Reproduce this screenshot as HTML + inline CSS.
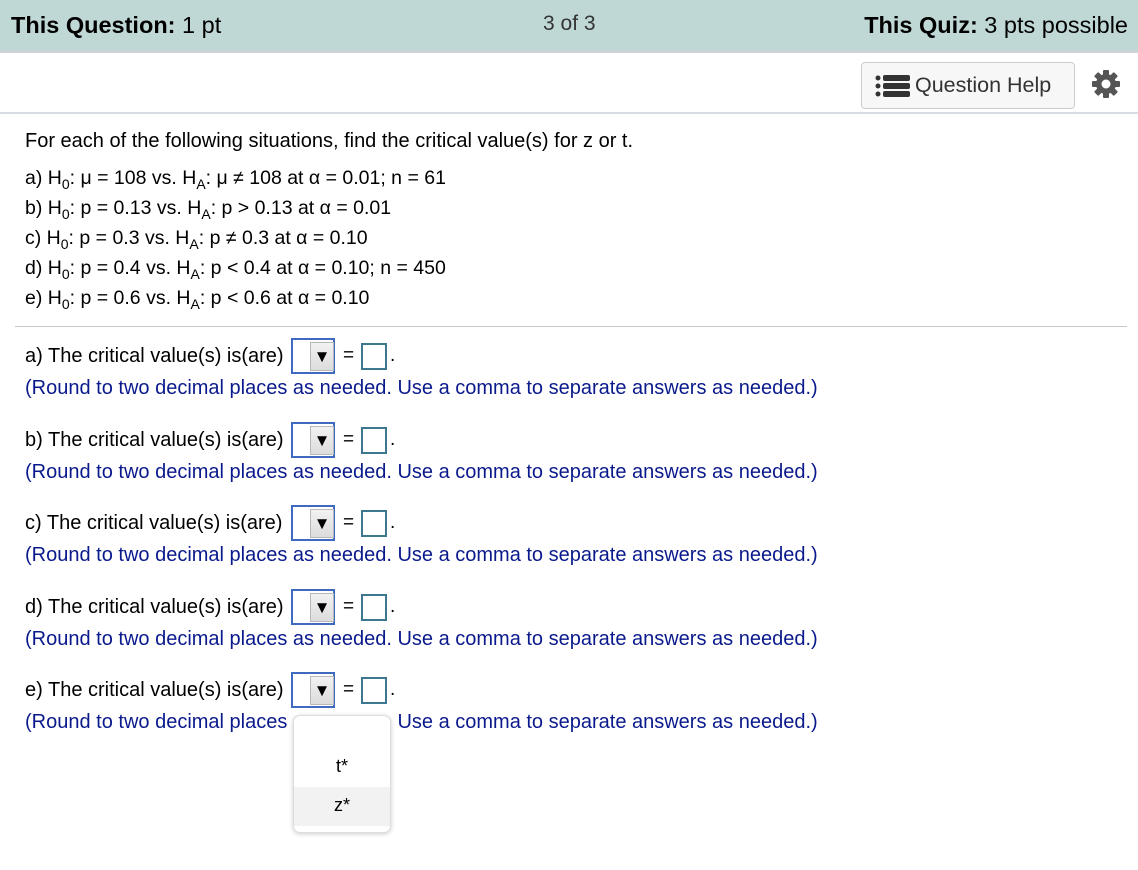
<!DOCTYPE html>
<html><head><meta charset="utf-8"><style>
*{margin:0;padding:0;box-sizing:border-box}
body{width:1138px;height:870px;background:#fff;font-family:"Liberation Sans",Arial,sans-serif;color:#000;position:relative;overflow:hidden}
.hdr{position:absolute;left:0;top:0;width:1138px;height:53px;background:#bfd8d6;border-bottom:2px solid #d0d4d8}
.hdr div{position:absolute;top:12px;font-size:23.5px}
.t{position:absolute;font-size:20px;white-space:nowrap}
.p{font-size:19.5px}
.blue{color:#0a1a8c}
sub{font-size:14px;vertical-align:-5px}
.dd{position:absolute;left:291px;width:44px;height:36px;border:2px solid #3e6ac0}
.dd i{position:absolute;left:17px;top:2px;width:24px;height:29px;background:linear-gradient(#f2f2f2,#dcdcdc);border:1px solid #b8b8b8;font-style:normal;font-size:17px;text-align:center;line-height:27px}
.eq{position:absolute;left:343px;font-size:19px}
.box{position:absolute;left:361px;width:26px;height:27px;border:2px solid #3d7890}
.dot{position:absolute;left:390px;font-size:19px}
</style></head><body>
<div class="hdr">
<div style="left:11px"><b>This Question:</b> 1 pt</div>
<div style="left:543px;font-size:21px;color:#333">3 of 3</div>
<div style="right:10px"><b>This Quiz:</b> 3 pts possible</div>
</div>
<div style="position:absolute;left:861px;top:62px;width:214px;height:47px;border:1px solid #ccc;border-radius:4px;background:#f7f7f7;font-size:21.5px;color:#333;padding:10px 0 0 53px">Question Help</div>
<svg style="position:absolute;left:875px;top:75px" width="36" height="22" viewBox="0 0 36 22"><g fill="#333"><circle cx="3" cy="3" r="2.5"/><circle cx="3" cy="11" r="2.5"/><circle cx="3" cy="19" r="2.5"/><rect x="8" y="0" width="27" height="6" rx="2"/><rect x="8" y="8" width="27" height="6" rx="2"/><rect x="8" y="16" width="27" height="6" rx="2"/></g></svg>
<svg style="position:absolute;left:1091px;top:69px" width="30" height="30" viewBox="-15 -15 30 30"><g fill="#555"><circle r="10"/><rect x="-3" y="-14" width="6" height="28" rx="1"/><rect x="-3" y="-14" width="6" height="28" rx="1" transform="rotate(45)"/><rect x="-3" y="-14" width="6" height="28" rx="1" transform="rotate(90)"/><rect x="-3" y="-14" width="6" height="28" rx="1" transform="rotate(135)"/></g><circle r="4.5" fill="#fff"/></svg>
<div style="position:absolute;left:0;top:112px;width:1138px;height:2px;background:#d8dce4"></div>

<div class="t" style="left:25px;top:130px">For each of the following situations, find the critical value(s) for z or t.</div>
<div class="t p" style="left:25px;top:167px">a) H<sub>0</sub>: μ = 108 vs. H<sub>A</sub>: μ ≠ 108 at α = 0.01; n = 61</div>
<div class="t p" style="left:25px;top:197px">b) H<sub>0</sub>: p = 0.13 vs. H<sub>A</sub>: p &gt; 0.13 at α = 0.01</div>
<div class="t p" style="left:25px;top:227px">c) H<sub>0</sub>: p = 0.3 vs. H<sub>A</sub>: p ≠ 0.3 at α = 0.10</div>
<div class="t p" style="left:25px;top:257px">d) H<sub>0</sub>: p = 0.4 vs. H<sub>A</sub>: p &lt; 0.4 at α = 0.10; n = 450</div>
<div class="t p" style="left:25px;top:287px">e) H<sub>0</sub>: p = 0.6 vs. H<sub>A</sub>: p &lt; 0.6 at α = 0.10</div>
<div style="position:absolute;left:15px;top:326px;width:1112px;height:1px;background:#c8c8c8"></div>

<div class="t" style="left:25px;top:345px">a) The critical value(s) is(are)</div>
<div class="dd" style="top:338px"><i>▼</i></div><div class="eq" style="top:345px">=</div><div class="box" style="top:343px"></div><div class="dot" style="top:345px">.</div>
<div class="t blue" style="left:25px;top:377px">(Round to two decimal places as needed. Use a comma to separate answers as needed.)</div>

<div class="t" style="left:25px;top:429px">b) The critical value(s) is(are)</div>
<div class="dd" style="top:422px"><i>▼</i></div><div class="eq" style="top:429px">=</div><div class="box" style="top:427px"></div><div class="dot" style="top:429px">.</div>
<div class="t blue" style="left:25px;top:461px">(Round to two decimal places as needed. Use a comma to separate answers as needed.)</div>

<div class="t" style="left:25px;top:512px">c) The critical value(s) is(are)</div>
<div class="dd" style="top:505px"><i>▼</i></div><div class="eq" style="top:512px">=</div><div class="box" style="top:510px"></div><div class="dot" style="top:512px">.</div>
<div class="t blue" style="left:25px;top:544px">(Round to two decimal places as needed. Use a comma to separate answers as needed.)</div>

<div class="t" style="left:25px;top:596px">d) The critical value(s) is(are)</div>
<div class="dd" style="top:589px"><i>▼</i></div><div class="eq" style="top:596px">=</div><div class="box" style="top:594px"></div><div class="dot" style="top:596px">.</div>
<div class="t blue" style="left:25px;top:628px">(Round to two decimal places as needed. Use a comma to separate answers as needed.)</div>

<div class="t" style="left:25px;top:679px">e) The critical value(s) is(are)</div>
<div class="dd" style="top:672px"><i>▼</i></div><div class="eq" style="top:679px">=</div><div class="box" style="top:677px"></div><div class="dot" style="top:679px">.</div>
<div class="t blue" style="left:25px;top:711px">(Round to two decimal places as needed. Use a comma to separate answers as needed.)</div>

<div style="position:absolute;left:286px;top:712px;width:110px;height:8px;background:#fff"></div>
<div style="position:absolute;left:293px;top:715px;width:98px;height:118px;background:#fff;border:1px solid #ddd;border-radius:7px;box-shadow:0 1px 5px rgba(0,0,0,.2);overflow:hidden">
<div style="position:absolute;top:40px;width:100%;text-align:center;font-size:18px">t*</div>
<div style="position:absolute;top:71px;width:100%;height:39px;background:#f2f2f2;text-align:center;font-size:18px;padding-top:8px">z*</div>
</div>
</body></html>
